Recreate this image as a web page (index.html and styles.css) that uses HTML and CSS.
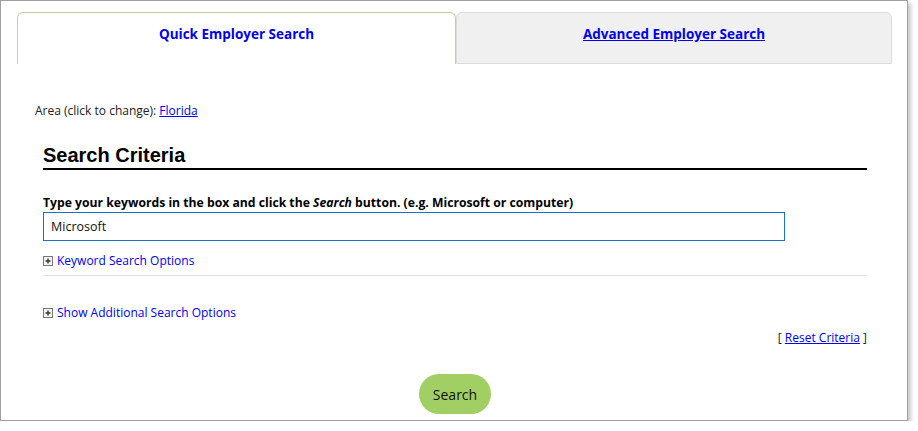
FILE: index.html
```html
<!DOCTYPE html>
<html>
<head>
<meta charset="utf-8">
<link rel="stylesheet" href="styles.css">
</head>
<body>
<div class="frame">
  <div class="tabs">
    <div class="tab tab-active"><span class="tab-label">Quick Employer Search</span></div>
    <div class="tab tab-idle"><a class="tab-link" href="#">Advanced Employer Search</a></div>
  </div>
  <div class="content">
    <div class="area">Area (click to change): <a href="#" class="link">Florida</a></div>
    <h2 class="section-title">Search Criteria</h2>
    <div class="field-label">Type your keywords in the box and click the <em>Search</em> button. (e.g. Microsoft or computer)</div>
    <input class="keyword-input" type="text" value="Microsoft">
    <div class="toggle toggle-first">
      <svg class="plus" width="10" height="10" viewBox="0 0 10 10"><rect x="0.5" y="0.5" width="9" height="9" fill="#f4f4f4" stroke="#777"/><path d="M2.5 5H7.5M5 2.5V7.5" stroke="#333" stroke-width="1.4"/></svg>
      <a href="#" class="toggle-link">Keyword Search Options</a>
    </div>
    <div class="divider"></div>
    <div class="toggle toggle-second">
      <svg class="plus" width="10" height="10" viewBox="0 0 10 10"><rect x="0.5" y="0.5" width="9" height="9" fill="#f4f4f4" stroke="#777"/><path d="M2.5 5H7.5M5 2.5V7.5" stroke="#333" stroke-width="1.4"/></svg>
      <a href="#" class="toggle-link">Show Additional Search Options</a>
    </div>
    <div class="reset">[ <a href="#" class="link">Reset Criteria</a> ]</div>
    <div class="actions"><button class="search-btn">Search</button></div>
  </div>
</div>
</body>
</html>
```
FILE: styles.css
```css
html, body {
  margin: 0;
  padding: 0;
  background: #fff;
}
body {
  font-family: "Open Sans", "Noto Sans", sans-serif;
  font-size: 12px;
  color: #222;
}
.frame {
  box-sizing: border-box;
  width: 908px;
  height: 421px;
  border: 1px solid #a0a0a0;
  box-shadow: 3px 3px 4px rgba(0, 0, 0, 0.22);
  background: #fff;
}
.tabs {
  display: flex;
  padding: 11px 14px 0 16px;
}
.tab {
  box-sizing: border-box;
  height: 52px;
  display: flex;
  justify-content: center;
  padding-top: 12px;
  border-radius: 6px 6px 0 0;
  font-size: 13.5px;
  font-weight: 700;
}
.tab-active {
  width: 439px;
  border: 1px solid #c9cca2;
  border-bottom: none;
  background: #fff;
}
.tab-idle {
  width: 436px;
  border: 1px solid #dcdcdc;
  background: #f0f0f0;
}
.tab-label {
  color: #0000ee;
}
.tab-link {
  color: #0000ee;
  text-decoration: underline;
}
.content {
  padding: 0 40px 0 42px;
}
.area {
  margin-top: 39px;
  margin-left: -8px;
  line-height: 16px;
}
.link {
  color: #0000ee;
}
.section-title {
  margin: 25px 0 0 0;
  padding-bottom: 2px;
  font-family: "Liberation Sans", Arial, sans-serif;
  font-size: 20px;
  font-weight: 700;
  line-height: 22px;
  color: #000;
  border-bottom: 2px solid #000;
}
.field-label {
  margin-top: 25px;
  font-size: 12.2px;
  font-weight: 700;
  color: #000;
  line-height: 16px;
}
.field-label em {
  font-style: italic;
}
.keyword-input {
  box-sizing: border-box;
  display: block;
  margin-top: 1px;
  width: 742px;
  height: 29px;
  border: 1px solid #1c72c4;
  padding: 0 7px;
  font-family: "Open Sans", "Noto Sans", sans-serif;
  font-size: 12.5px;
  color: #111;
  outline: none;
}
.toggle {
  display: flex;
  align-items: center;
  gap: 4px;
  line-height: 16px;
}
.toggle-first {
  margin-top: 12px;
}
.toggle-second {
  margin-top: 29px;
}
.plus {
  display: block;
  flex: none;
}
.toggle-link {
  color: #0000ee;
  text-decoration: none;
}
.divider {
  margin-top: 6px;
  height: 1px;
  background: #e4e4d8;
}
.reset {
  margin-top: 9px;
  text-align: right;
  line-height: 16px;
}
.actions {
  display: flex;
  justify-content: center;
  margin-top: 28px;
}
.search-btn {
  width: 72px;
  height: 40px;
  border: none;
  border-radius: 20px;
  background: #a2cf63;
  font-family: "Open Sans", "Noto Sans", sans-serif;
  font-size: 14px;
  color: #111;
  padding: 0;
}
```
